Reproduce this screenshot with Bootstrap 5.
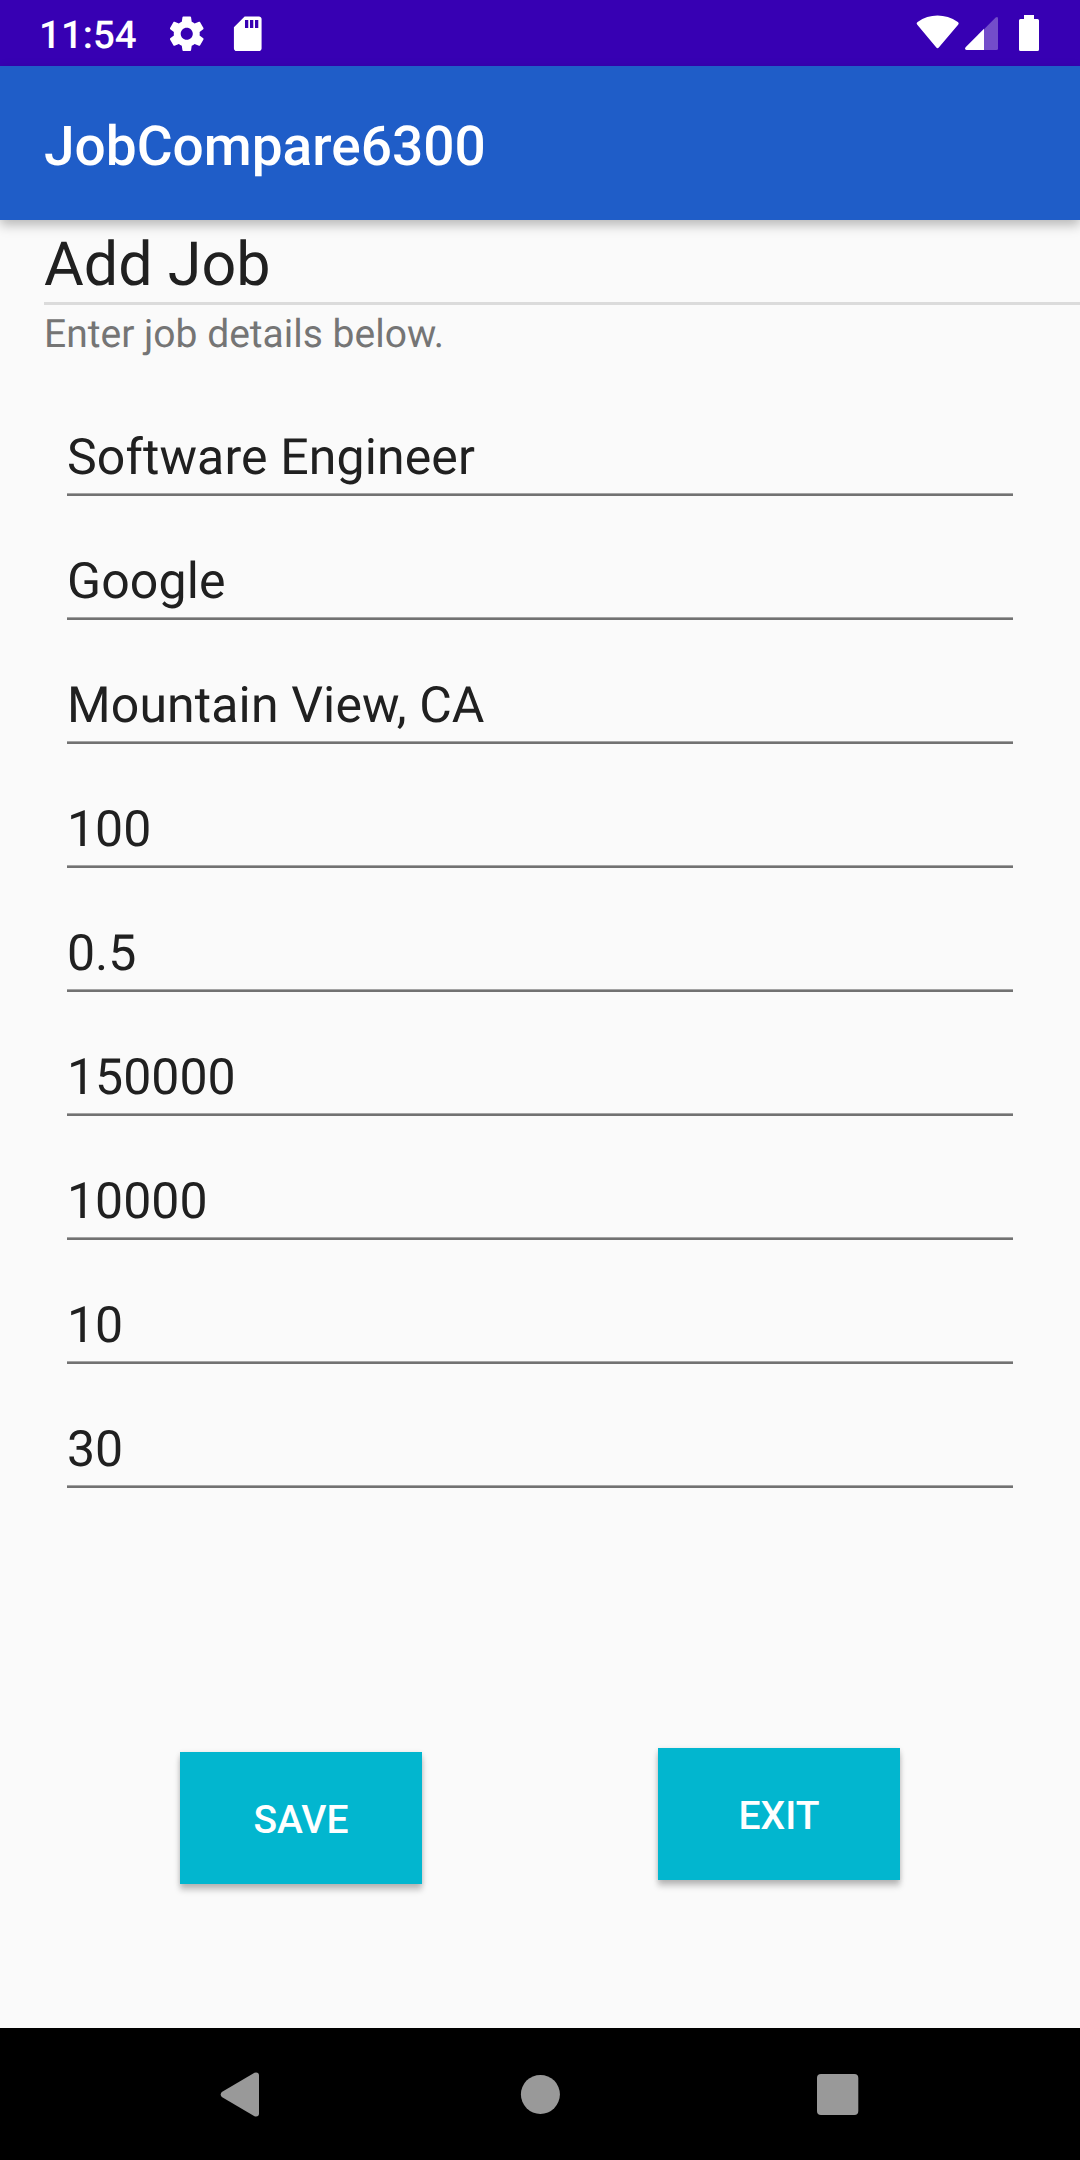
<!DOCTYPE html>
<html lang="en">
<head>
<meta charset="utf-8">
<meta name="viewport" content="width=device-width, initial-scale=1">
<title>JobCompare6300</title>
<link href="https://cdn.jsdelivr.net/npm/bootstrap@5.3.0/dist/css/bootstrap.min.css" rel="stylesheet">
<style>
  body { font-family: Roboto, "Noto Sans", sans-serif; background: #fafafa; color: #202020; text-rendering: geometricPrecision; }
  .screen { width: 1080px; height: 2160px; }
  .statusbar { height: 66px; background: #3700b3; color: #fff; padding: 0 41px 0 39px; }
  .statusbar svg, .sysnav svg { display: block; flex: none; }
  .clock { width: 127px; font-size: 38.5px; line-height: 45px; font-weight: 500; padding-top: 4px; }
  .icon-gear { margin-top: 1px; }
  .icon-sd { margin: 1px 0 0 19px; }
  .icon-signal { margin-left: 5px; }
  .icon-battery { margin-left: 21px; }
  .appbar { height: 154px; background: #1f5dc8; padding: 0 44px; z-index: 1; box-shadow: 0 5px 11px rgba(0,0,0,.27); }
  .app-title { font-size: 55px; line-height: 64px; font-weight: 500; color: #fff; padding-top: 8px; }
  .page-head { margin-left: 44px; }
  .page-title { font-size: 61px; line-height: 71px; padding: 9px 0 2px; font-weight: 400; }
  .title-rule { height: 3px; background: #dbdbdb; }
  .hint-text { font-size: 39px; line-height: 45px; color: #757575; margin-top: 7px; }
  .job-form { margin: 15px 67px 0; }
  .job-field { height: 124px; padding-top: 57px; font-size: 50px; line-height: 58px; letter-spacing: .12px; }
  .job-number { letter-spacing: 0; }
  .job-field::after { content: ""; display: block; height: 3px; margin-top: 6px; background: linear-gradient(#a4a4a4 1px, #727272 1px); }
  .actions { margin-top: 260px; padding: 0 180px; }
  .btn-job { --bs-btn-color: #fff; --bs-btn-bg: #02b6cf; --bs-btn-hover-color: #fff; --bs-btn-hover-bg: #00a3ba; width: 242px; height: 132px; font-size: 39px; font-weight: 500; line-height: 45px; padding: 5px 0 0; box-shadow: 0 6px 6px rgba(0,0,0,.22), 0 1px 5px rgba(0,0,0,.12); }
  .btn-save { margin-top: 4px; }
  .sysnav { height: 132px; background: #000; padding-left: 220px; }
  .nav-home { margin-left: 260px; }
  .nav-recent { margin-left: 257px; }
</style>
</head>
<body>
<div class="screen d-flex flex-column overflow-hidden">
  <div class="statusbar d-flex align-items-center flex-shrink-0">
    <span class="clock">11:54</span>
    <svg class="icon-gear" width="41.5" height="41.5" viewBox="0 0 24 24" fill="#fff" aria-hidden="true"><path d="M19.43 12.98c.04-.32.07-.64.07-.98s-.03-.66-.07-.98l2.11-1.65c.19-.15.24-.42.12-.64l-2-3.46c-.12-.22-.39-.3-.61-.22l-2.49 1c-.52-.4-1.08-.73-1.69-.98l-.38-2.65C14.46 2.18 14.25 2 14 2h-4c-.25 0-.46.18-.49.42l-.38 2.65c-.61.25-1.17.59-1.69.98l-2.49-1c-.23-.09-.49 0-.61.22l-2 3.46c-.13.22-.07.49.12.64l2.11 1.65c-.04.32-.07.65-.07.98s.03.66.07.98l-2.11 1.65c-.19.15-.24.42-.12.64l2 3.46c.12.22.39.3.61.22l2.49-1c.52.4 1.08.73 1.69.98l.38 2.65c.03.24.24.42.49.42h4c.25 0 .46-.18.49-.42l.38-2.65c.61-.25 1.17-.59 1.69-.98l2.49 1c.23.09.49 0 .61-.22l2-3.46c.12-.22.07-.49-.12-.64l-2.11-1.65zM12 15.5c-1.93 0-3.5-1.57-3.5-3.5s1.57-3.5 3.5-3.5 3.5 1.57 3.5 3.5-1.57 3.5-3.5 3.5z"/></svg>
    <svg class="icon-sd" width="41.5" height="41.5" viewBox="0 0 24 24" fill="#fff" aria-hidden="true"><path d="M18.500 2h-8.300L4 8.200V20.500c0 .8.700 1.500 1.500 1.500h13c.8 0 1.500-.7 1.500-1.500v-17c0-.8-.7-1.500-1.500-1.500zM12.300 8.700h-1.900V4h1.900v4.700zm2.900 0h-1.900V4h1.900v4.700zm2.900 0h-1.900V4h1.900v4.700z"/></svg>
    <div class="d-flex ms-auto">
      <svg width="44" height="36" viewBox="0 0 44 36" fill="#fff" aria-hidden="true"><path d="M1.300 9.700Q-.1 8 1.600 6.900Q11 .5 21.500.5Q32 .5 41.800 6.900Q43.400 8 42.100 9.700L23 32.300Q21.500 34 20.100 32.300Z"/></svg>
      <svg class="icon-signal" width="33" height="36" viewBox="0 0 33 36" fill="#fff" aria-hidden="true"><path opacity=".3" d="M19 14.300 30.400 2.700Q33 .8 33 3.500V33.500Q33 35 31.500 35H19Z"/><path d="M19 13.800V35H1.500Q-.9 34.500.6 32.300Z"/></svg>
      <svg class="icon-battery" width="20" height="36" viewBox="0 0 20 36" fill="#fff" aria-hidden="true"><path d="M5 0H15V4H18.500Q20 4 20 5.500V34.500Q20 36 18.500 36H1.500Q0 36 0 34.500V5.500Q0 4 1.500 4H5Z"/></svg>
    </div>
  </div>

  <header class="appbar d-flex align-items-center flex-shrink-0 position-relative">
    <span class="app-title">JobCompare6300</span>
  </header>

  <main class="flex-grow-1">
    <div class="page-head">
      <h1 class="page-title m-0">Add Job</h1>
      <div class="title-rule"></div>
      <p class="hint-text mb-0">Enter job details below.</p>
    </div>
    <div class="job-form">
      <div class="job-field" role="textbox">Software Engineer</div>
      <div class="job-field" role="textbox">Google</div>
      <div class="job-field" role="textbox">Mountain View, CA</div>
      <div class="job-field job-number" role="textbox">100</div>
      <div class="job-field job-number" role="textbox">0.5</div>
      <div class="job-field job-number" role="textbox">150000</div>
      <div class="job-field job-number" role="textbox">10000</div>
      <div class="job-field job-number" role="textbox">10</div>
      <div class="job-field job-number" role="textbox">30</div>
    </div>
    <div class="actions d-flex justify-content-between align-items-start">
      <button type="button" class="btn btn-job btn-save border-0 rounded-0">SAVE</button>
      <button type="button" class="btn btn-job border-0 rounded-0">EXIT</button>
    </div>
  </main>

  <nav class="sysnav d-flex align-items-center flex-shrink-0" aria-label="System">
    <svg width="40" height="46" viewBox="0 0 40 46" fill="#999"><path d="M1.800 21 34.500 1.700Q39 .8 39 4.500V42.500Q39 46.200 34.500 45.300L1.800 26Q-.4 23.500 1.800 21Z"/></svg>
    <svg class="nav-home" width="40" height="40" viewBox="0 0 40 40" fill="#999"><circle cx="20.400" cy="20.400" r="19.500"/></svg>
    <svg class="nav-recent" width="42" height="42" viewBox="0 0 42 42" fill="#999"><rect y="1" width="41.300" height="41" rx="4"/></svg>
  </nav>
</div>
<script src="https://cdn.jsdelivr.net/npm/bootstrap@5.3.0/dist/js/bootstrap.bundle.min.js"></script>
</body>
</html>
